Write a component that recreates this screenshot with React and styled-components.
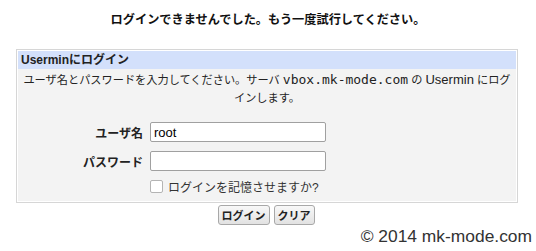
import styled, { createGlobalStyle } from "styled-components";

const Global = createGlobalStyle`
  html, body {
    margin: 0;
    background: #ffffff;
  }
  body {
    font-family: "Liberation Sans", Arial, "Noto Sans CJK JP", sans-serif;
    font-size: 12px;
    color: #222;
  }
`;

const Page = styled.div`
  width: 536px;
  height: 251px;
  overflow: hidden;
`;

const Title = styled.div`
  padding-top: 12px;
  line-height: 16px;
  text-align: center;
  font-size: 12.2px;
  font-weight: bold;
  color: #111;
`;

const Box = styled.div`
  margin: 21px 0 0 16px;
  width: 498px;
  border: 1px solid #d6d6d6;
  padding: 1px;
  background: #fff;
`;

const Header = styled.div`
  height: 18px;
  line-height: 18px;
  padding-left: 3px;
  background: #d3e0fb;
  font-weight: bold;
`;

const Body = styled.div`
  background: #f3f3f3;
  padding: 2px 0 6px;
`;

const Desc = styled.p`
  margin: 0;
  line-height: 18px;
  font-size: 11.2px;
  text-align: center;
  white-space: nowrap;
`;

const Latin = styled.span`
  font-size: 13px;
`;

const Mono = styled.span`
  font-family: "DejaVu Sans Mono", "Liberation Mono", monospace;
  font-size: 13px;
`;

const Form = styled.div`
  display: grid;
  grid-template-columns: 125px 1fr;
  column-gap: 7px;
  row-gap: 9px;
  margin-top: 15px;
  align-items: center;
`;

const Label = styled.label`
  text-align: right;
  font-weight: bold;
`;

const Input = styled.input`
  box-sizing: border-box;
  width: 176px;
  height: 20px;
  border: 1px solid #a0a0a0;
  border-radius: 2px;
  padding: 0 3px;
  font-family: "Liberation Sans", Arial, sans-serif;
  font-size: 13px;
  background: #fff;
  color: #000;
  outline: none;
`;

const Remember = styled.label`
  grid-column: 2;
  display: flex;
  align-items: center;
  gap: 5px;
  margin-top: -2px;
  color: #333;
`;

const Check = styled.span`
  box-sizing: border-box;
  width: 13px;
  height: 13px;
  border: 1px solid #b4b4b4;
  border-radius: 2px;
  background: #fff;
`;

const Buttons = styled.div`
  display: flex;
  justify-content: center;
  gap: 4px;
  margin: 2px 4px 0 0;
`;

const Button = styled.button`
  height: 20px;
  padding: 0 3px;
  border: 1px solid #a8a8a8;
  border-radius: 3px;
  background: linear-gradient(#f8f8f8, #e2e2e2);
  font-family: "Liberation Sans", Arial, "Noto Sans CJK JP", sans-serif;
  font-size: 11px;
  font-weight: bold;
  color: #222;
`;

const Credit = styled.div`
  margin-top: 3px;
  padding-right: 4px;
  text-align: right;
  font-size: 17.4px;
  line-height: 17px;
  color: #333;
`;

export default function App() {
  return (
    <Page>
      <Global />
      <Title>ログインできませんでした。もう一度試行してください。</Title>
      <Box>
        <Header>Userminにログイン</Header>
        <Body>
          <Desc>
            ユーザ名とパスワードを入力してください。サーバ <Mono>vbox.mk-mode.com</Mono> の <Latin>Usermin</Latin> にログ
            <br />
            インします。
          </Desc>
          <Form>
            <Label>ユーザ名</Label>
            <Input defaultValue="root" />
            <Label>パスワード</Label>
            <Input type="password" />
            <Remember>
              <Check />
              ログインを記憶させますか?
            </Remember>
          </Form>
        </Body>
      </Box>
      <Buttons>
        <Button>ログイン</Button>
        <Button>クリア</Button>
      </Buttons>
      <Credit>© 2014 mk-mode.com</Credit>
    </Page>
  );
}
